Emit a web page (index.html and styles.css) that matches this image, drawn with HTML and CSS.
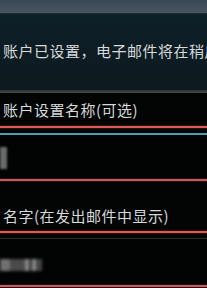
FILE: index.html
```html
<!DOCTYPE html>
<html lang="zh">

<head>
    <meta charset="UTF-8">
    <meta name="viewport" content="width=device-width, initial-scale=1.0">
    <title>账户设置</title>
    <link rel="stylesheet" href="styles.css">
</head>

<body>
    <div class="screen">
        <div class="title-bar"></div>

        <div class="notice">
            <p class="notice-text">账户已设置，电子邮件将在稍后发送。</p>
        </div>
        <div class="divider"></div>

        <div class="field">
            <div class="field-label">账户设置名称(可选)</div>
            <div class="line-red"></div>
            <div class="line-blue"></div>
            <div class="field-input">
                <span class="cursor"></span>
            </div>
            <div class="line-red dim"></div>
        </div>

        <div class="field">
            <div class="field-label second">名字(在发出邮件中显示)</div>
            <div class="line-red"></div>
            <div class="line-gray"></div>
            <div class="field-input value">
                <span class="blur-text"></span>
            </div>
            <div class="line-red dim"></div>
        </div>
    </div>
</body>

</html>
```

FILE: styles.css
```css
body {
    margin: 0;
    background: #000;
    font-family: "Noto Sans CJK SC", "Noto Sans", sans-serif;
    color: #d6dadb;
}

.screen {
    width: 207px;
    height: 288px;
    overflow: hidden;
    background: #030505;
}

.title-bar {
    height: 13px;
    background: linear-gradient(#3a4755, #48555f);
    border-bottom: 1px solid #1c2a33;
}

.notice {
    height: 76px;
    background: linear-gradient(#0d1f28, #0e1a1f);
    display: flex;
    align-items: center;
    overflow: hidden;
}

/* the sentence runs past the screen edge, as on the device */
.notice-text {
    margin: 0 0 4px 3px;
    font-size: 15px;
    letter-spacing: 0.5px;
    white-space: nowrap;
}

.divider {
    height: 3px;
    background: linear-gradient(#2c3132, #464b4c);
}

.field-label {
    height: 33px;
    display: flex;
    align-items: center;
    padding-left: 3px;
    font-size: 15px;
    letter-spacing: 0.5px;
    white-space: nowrap;
}

.field-label.second {
    height: 50px;
    padding-top: 18px;
    box-sizing: border-box;
}

.line-red {
    height: 2px;
    background: #e05a5a;
    box-shadow: 0 0 2px rgba(224, 90, 90, 0.6);
}

.line-red.dim {
    background: #c65a62;
}

.line-blue {
    height: 2px;
    margin-top: 5px;
    background: #4e9fae;
}

.line-gray {
    height: 1px;
    margin-top: 5px;
    background: #2a2c2d;
}

.field-input {
    height: 44px;
    display: flex;
    align-items: center;
    background: #020303;
}

.field-input.value {
    height: 46px;
}

.cursor {
    width: 7px;
    height: 22px;
    margin-top: 2px;
    background: #6a6a6a;
    filter: blur(1px);
}

.blur-text {
    width: 42px;
    height: 12px;
    margin-top: 6px;
    background: linear-gradient(90deg, #707070 0 24%, #4a4a4a 24% 60%, #888 60% 68%, #3a3a3a 68% 76%, #888 76% 86%, #444 86%);
    filter: blur(1.5px);
}
```
